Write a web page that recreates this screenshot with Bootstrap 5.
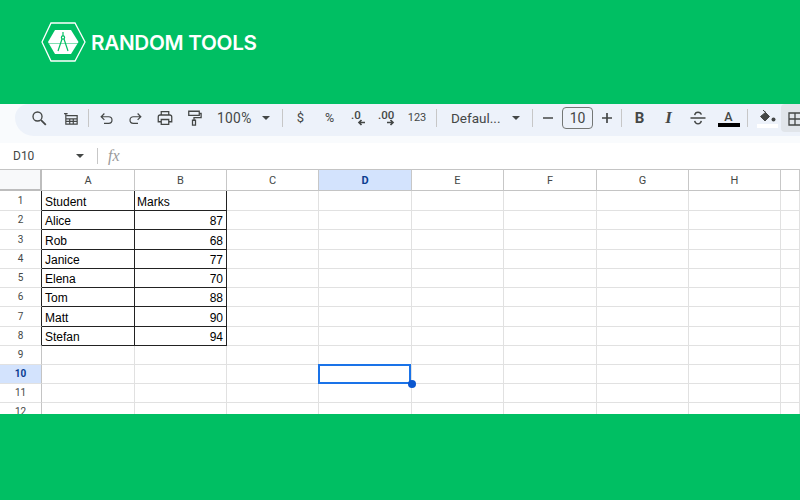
<!DOCTYPE html>
<html lang="en">
<head>
<meta charset="utf-8">
<title>Random Tools</title>
<link href="https://cdn.jsdelivr.net/npm/bootstrap@5.3.0/dist/css/bootstrap.min.css" rel="stylesheet">
<style>
html,body{height:100%;margin:0}
body{background:#00bf63;overflow:hidden;font-family:"Liberation Sans",sans-serif}
.brandbar{height:104px;padding:22px 0 0 41px}
.brandname{font-family:"Inter",sans-serif;font-weight:600;font-size:20.7px;letter-spacing:-.3px;color:#fff;line-height:42px;margin-left:5px}
.footband{height:86px}
.sheetapp{height:310px;background:#fff;overflow:hidden}
.strip{height:39px;background:#f9fbfd}
.pill{height:32px;margin-left:15px;background:#edf2fa;border-radius:16px 0 0 22px;padding-left:10px;color:#444746;font-family:"Roboto",sans-serif;overflow:hidden}
.pill svg{display:block;fill:none;stroke:#444746;stroke-width:1.7}
.tbi{width:29px;height:28px;flex:none;display:flex;align-items:center;justify-content:center;font-size:13px}
.wide{width:34px}
.slim{width:22px}
.numfmt{width:30px;font-size:11px}
.pctg{font-size:12.5px}
.sepline{width:1px;height:18px;margin-top:5px;background:#c7c7c7;flex:none}
.gapa{margin-left:8px}.gapb{margin-right:3px}.gapc{margin-left:4px}.gapd{margin-left:3px}.gape{margin-left:2px}.gapf{margin-right:5px}
.zoomv{width:66px;padding-left:9px;font-size:13.8px;height:28px;flex:none;display:flex;align-items:center;justify-content:space-between;padding-right:4px;letter-spacing:.3px}
.fontv{width:87px;padding-left:14px;padding-right:4px;font-size:13.5px;height:28px;flex:none;display:flex;align-items:center;justify-content:space-between}
.caret{width:0;height:0;border-left:4.5px solid transparent;border-right:4.5px solid transparent;border-top:4.5px solid #444746}
.sizebox{width:31px;height:22px;margin:3px 3px 0;flex:none;border:1px solid #747775;border-radius:4px;text-align:center;line-height:20px;font-size:14px}
.boldg{font-family:"Roboto",sans-serif;font-weight:700;font-size:15px;font-style:normal}
.italg{font-family:"Liberation Serif",serif;font-weight:700;font-size:17px;font-style:italic}
.stackcol{padding-top:1px}
.colorbar{width:22px;height:4px;background:#000}
.colora{font-size:12.5px;line-height:13px;font-weight:500}
.fillbar{width:21px;height:4px;background:#fff;margin-top:1px}
.activebtn{width:30px;height:28px;margin-left:-1px;background:#e1e5ea;border-radius:4px;flex:none;display:flex;align-items:center;padding-left:6px;padding-top:2px}
.formulabar{height:26px;font-size:12px;color:#444746;font-family:"Roboto",sans-serif}
.namebox{width:84px;padding-left:13px;padding-right:0;height:26px;flex:none;display:flex;align-items:center;justify-content:space-between}
.fxsep{width:1px;height:16px;background:#c7c7c7;margin-left:13px}
.fxmark{margin-left:10px;font-family:"Liberation Serif",serif;font-style:italic;font-size:16px;color:#9a9a9a}
.gridtab{table-layout:fixed;border-collapse:separate;border-spacing:0;width:800px;font-size:12px;color:#000}
.gridtab td,.gridtab th{padding:0 3px;border-right:1px solid #e1e1e1;border-bottom:1px solid #e1e1e1;overflow:hidden;white-space:nowrap;line-height:1;vertical-align:middle}
.gridtab tbody td{vertical-align:bottom;padding-bottom:2px}
.gridtab thead th{height:22px;background:#fff;font-family:"Roboto",sans-serif;font-size:11px;font-weight:400;color:#444746;text-align:center;border-right:1px solid #c7c7c7;border-bottom:1px solid #c4c4c4;border-top:1px solid #c4c4c4}
.gridtab tbody th{background:#fff;font-family:"Roboto",sans-serif;font-size:10px;font-weight:400;color:#444746;text-align:center;border-right:1px solid #c4c4c4}
.gridtab thead th.cornerc{background:#f8f9fa;border-right:2px solid #bdbdbd;border-bottom:2px solid #bdbdbd}
.gridtab thead th.hot,.gridtab tbody th.hot{background:#d3e3fd;color:#0b3d91;font-weight:700}
.gridtab tbody th.dk{border-right:1px solid #222}
.gridtab td.dk{border-right:1px solid #222;border-bottom:1px solid #222}
.gridtab td.marksh{padding-left:2px}
.gridtab tr.tall{height:20px}
.gridtab tr.std{height:19px}
.numcell{text-align:right}
.gridtab td.selcell{overflow:visible}
.selbox{position:absolute;left:-1px;right:0;top:-1px;bottom:-1px;border:2px solid #1a73e8}
.seldot{position:absolute;right:-4.5px;bottom:-4.5px;width:8px;height:8px;border-radius:50%;background:#0b57d0}
</style>
</head>
<body>
<header class="brandbar d-flex align-items-start">
  <svg width="45" height="40" viewBox="0 0 45 40" aria-hidden="true">
    <polygon points="10,1 34,1 44,20 34,39 10,39 1,20" fill="none" stroke="#fff" stroke-width="1.300"/>
    <polygon points="14,8 30,8 37.500,20 30,32 14,32 7,20" fill="#fff"/>
    <g fill="none" stroke="#00bf63" stroke-width="1.200">
      <path d="M22 10v4"/>
      <circle cx="22" cy="15.500" r="1.600"/>
      <path d="M21 17 17 29M23 17 27 29"/>
      <path d="M8 21.500h29" stroke-width=".500"/>
    </g>
  </svg>
  <span class="brandname">RANDOM TOOLS</span>
</header>

<main class="sheetapp d-flex flex-column">
  <div class="strip flex-shrink-0">
    <div class="pill d-flex align-items-start">
      <span class="tbi"><svg width="19" height="19" viewBox="0 0 24 24"><circle cx="9.500" cy="9.500" r="5.700"/><path d="M14 14l6 6" stroke-width="2.200"/></svg></span>
      <span class="tbi wide"><svg width="17" height="17" viewBox="0 0 24 24"><path d="M5 8h15v12H4V5M1.500 5h5M4 12.500h16M4 16h16M9.500 12.500V20M14.500 12.500V20"/></svg></span>
      <span class="sepline gapb"></span>
      <span class="tbi"><svg width="17" height="17" viewBox="0 0 24 24"><path d="M9 5 4.500 9.500 9 14M4.500 9.500H15a4.700 4.700 0 0 1 0 9.500H8.500"/></svg></span>
      <span class="tbi"><svg width="17" height="17" viewBox="0 0 24 24"><path d="M15 5l4.500 4.500L15 14M19.500 9.500H9a4.700 4.700 0 0 0 0 9.500h6.500"/></svg></span>
      <span class="tbi"><svg width="18" height="18" viewBox="0 0 24 24"><path d="M7 8V3.500h10V8M7 17H3v-6.500A2.500 2.500 0 0 1 5.500 8h13a2.500 2.500 0 0 1 2.500 2.500V17h-4M7 14h10v6.500H7z"/></svg></span>
      <span class="tbi"><svg width="18" height="18" viewBox="0 0 24 24"><path d="M5 3h14v5.500H5zM19 6h2.500v5.500H12V15M10 15h4v6.500h-4z"/></svg></span>
      <span class="zoomv"><span>100%</span><span class="caret"></span></span>
      <span class="sepline gapa"></span>
      <span class="tbi gapd">$</span>
      <span class="tbi pctg">%</span>
      <span class="tbi"><svg width="22" height="20" viewBox="0 0 22 20"><text x="3" y="11" font-family="Roboto,sans-serif" font-size="11.500" font-weight="500" fill="#444746" stroke="none">.0</text><path d="M17 14.500h-6M13.500 12l-2.500 2.500 2.500 2.500"/></svg></span>
      <span class="tbi"><svg width="24" height="20" viewBox="0 0 24 20"><text x="2" y="11" font-family="Roboto,sans-serif" font-size="11.500" font-weight="500" fill="#444746" stroke="none">.00</text><path d="M11 14.500h6M14.500 12l2.500 2.500-2.500 2.500"/></svg></span>
      <span class="tbi numfmt">123</span>
      <span class="sepline gapc"></span>
      <span class="fontv"><span>Defaul...</span><span class="caret"></span></span>
      <span class="sepline gapa"></span>
      <span class="tbi slim gapc"><svg width="14" height="14" viewBox="0 0 14 14"><path d="M2 7h10"/></svg></span>
      <span class="sizebox">10</span>
      <span class="tbi slim"><svg width="14" height="14" viewBox="0 0 14 14"><path d="M2 7h10M7 2v10"/></svg></span>
      <span class="sepline gapd gapb"></span>
      <span class="tbi"><span class="boldg">B</span></span>
      <span class="tbi"><span class="italg">I</span></span>
      <span class="tbi"><svg width="20" height="20" viewBox="0 0 24 24"><path d="M3 12h18M8 8.500C8.500 6 10 5 12 5s3.500 1 4 3M8 15.500c.5 2.500 2 3.500 4 3.500s3.500-1 4-3.500"/></svg></span>
      <span class="tbi flex-column stackcol gape"><span class="colora">A</span><span class="colorbar"></span></span>
      <span class="sepline gapc gapf"></span>
      <span class="tbi flex-column stackcol"><svg width="18" height="14" viewBox="0 0 18 14"><path d="M4 1l6.500 6.500L6 12 1.500 7.500 7 3" fill="#444746" stroke="#444746" stroke-width="1"/><circle cx="14.500" cy="10.500" r="2" fill="#444746" stroke="none"/></svg><span class="fillbar"></span></span>
      <span class="activebtn"><svg width="16" height="16" viewBox="0 0 24 24"><path d="M3 3h18v18H3zM12 3v18M3 12h18" stroke-width="2"/></svg></span>
    </div>
  </div>

  <div class="formulabar d-flex align-items-center flex-shrink-0">
    <span class="namebox"><span>D10</span><span class="caret"></span></span>
    <span class="fxsep"></span>
    <span class="fxmark">fx</span>
  </div>

  <table class="gridtab">
    <colgroup><col style="width:42px"><col style="width:93px"><col style="width:92px"><col style="width:92px"><col style="width:93px"><col style="width:92px"><col style="width:93px"><col style="width:92px"><col style="width:92px"><col></colgroup>
    <thead><tr><th class="cornerc"></th><th>A</th><th>B</th><th>C</th><th class="hot">D</th><th>E</th><th>F</th><th>G</th><th>H</th><th></th></tr></thead>
    <tbody>
      <tr class="tall"><th class="dk">1</th><td class="dk">Student</td><td class="dk marksh">Marks</td><td></td><td></td><td></td><td></td><td></td><td></td><td></td></tr>
      <tr class="std"><th class="dk">2</th><td class="dk">Alice</td><td class="dk numcell">87</td><td></td><td></td><td></td><td></td><td></td><td></td><td></td></tr>
      <tr class="tall"><th class="dk">3</th><td class="dk">Rob</td><td class="dk numcell">68</td><td></td><td></td><td></td><td></td><td></td><td></td><td></td></tr>
      <tr class="std"><th class="dk">4</th><td class="dk">Janice</td><td class="dk numcell">77</td><td></td><td></td><td></td><td></td><td></td><td></td><td></td></tr>
      <tr class="std"><th class="dk">5</th><td class="dk">Elena</td><td class="dk numcell">70</td><td></td><td></td><td></td><td></td><td></td><td></td><td></td></tr>
      <tr class="std"><th class="dk">6</th><td class="dk">Tom</td><td class="dk numcell">88</td><td></td><td></td><td></td><td></td><td></td><td></td><td></td></tr>
      <tr class="tall"><th class="dk">7</th><td class="dk">Matt</td><td class="dk numcell">90</td><td></td><td></td><td></td><td></td><td></td><td></td><td></td></tr>
      <tr class="std"><th class="dk">8</th><td class="dk">Stefan</td><td class="dk numcell">94</td><td></td><td></td><td></td><td></td><td></td><td></td><td></td></tr>
      <tr class="std"><th>9</th><td></td><td></td><td></td><td></td><td></td><td></td><td></td><td></td><td></td></tr>
      <tr class="std"><th class="hot">10</th><td></td><td></td><td></td><td class="selcell position-relative"><div class="selbox"></div><div class="seldot"></div></td><td></td><td></td><td></td><td></td><td></td></tr>
      <tr class="std"><th>11</th><td></td><td></td><td></td><td></td><td></td><td></td><td></td><td></td><td></td></tr>
      <tr class="std"><th>12</th><td></td><td></td><td></td><td></td><td></td><td></td><td></td><td></td><td></td></tr>
    </tbody>
  </table>
</main>
<footer class="footband"></footer>
<script src="https://cdn.jsdelivr.net/npm/bootstrap@5.3.0/dist/js/bootstrap.bundle.min.js"></script>
</body>
</html>
